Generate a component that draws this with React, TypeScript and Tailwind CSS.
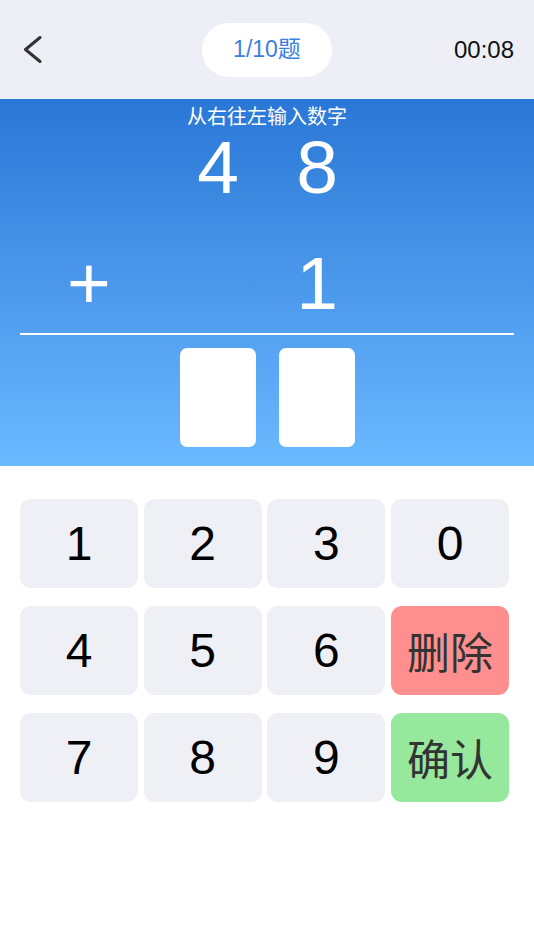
import React from "react";

const digitFont = { fontFamily: '"Liberation Sans", Arial, "Noto Sans CJK SC", sans-serif' };
const cjkFont = { fontFamily: '"Noto Sans CJK SC", "Liberation Sans", sans-serif' };

function Key({ label, kind }: { label: string; kind?: "del" | "ok" }) {
  const bg = kind === "del" ? "bg-[#ff8f8f]" : kind === "ok" ? "bg-[#96e89c]" : "bg-[#efeff6]";
  const text = kind ? "text-[43px] text-[#333333]" : "text-[48px] text-black";
  return (
    <div
      className={`h-[89px] rounded-[11px] flex items-center justify-center leading-none ${bg} ${text}`}
      style={kind ? cjkFont : digitFont}
    >
      {label}
    </div>
  );
}

export default function App() {
  const keys: { label: string; kind?: "del" | "ok" }[] = [
    { label: "1" }, { label: "2" }, { label: "3" }, { label: "0" },
    { label: "4" }, { label: "5" }, { label: "6" }, { label: "删除", kind: "del" },
    { label: "7" }, { label: "8" }, { label: "9" }, { label: "确认", kind: "ok" },
  ];
  return (
    <div className="w-[534px] h-[950px] bg-white" style={digitFont}>
      {/* Header */}
      <div className="h-[99px] bg-[#eeeff6] grid grid-cols-3 items-center">
        <div className="pl-[24px] flex items-center">
          <svg width="18" height="28" viewBox="0 0 18 28">
            <polyline points="16,1.5 1.5,13.5 16,25.5" fill="none" stroke="#333333" strokeWidth="3" strokeLinecap="round" strokeLinejoin="round" />
          </svg>
        </div>
        <div className="flex justify-center">
          <div className="w-[130px] h-[54px] rounded-full bg-white flex items-center justify-center text-[23px] text-[#3a80e0] leading-none">
            1/10题
          </div>
        </div>
        <div className="flex justify-end pr-[20px] text-[24px] text-[#111111] leading-none">00:08</div>
      </div>

      {/* Problem area */}
      <div className="h-[367px] bg-linear-to-b from-[#2a77d7] to-[#6bb9ff] flex flex-col pt-[5px] text-white">
        <div className="h-[24px] leading-[24px] text-[20px] text-center" style={cjkFont}>
          从右往左输入数字
        </div>
        <div className="flex pl-[51px] mt-[2px] h-[75px] text-[75px] leading-none">
          <div className="w-[76px] text-center"></div>
          <div className="w-[76px] ml-[53px] text-center">4</div>
          <div className="w-[76px] ml-[23px] text-center">8</div>
        </div>
        <div className="flex pl-[51px] mt-[41px] h-[75px] text-[75px] leading-none">
          <div className="w-[76px] text-center">+</div>
          <div className="w-[76px] ml-[53px] text-center"></div>
          <div className="w-[76px] ml-[23px] text-center">1</div>
        </div>
        <div className="mx-[20px] mt-[12px] h-[2px] bg-white"></div>
        <div className="flex pl-[180px] mt-[13px] gap-[23px]">
          <div className="w-[76px] h-[99px] rounded-[7px] bg-white"></div>
          <div className="w-[76px] h-[99px] rounded-[7px] bg-white"></div>
        </div>
      </div>

      {/* Keypad */}
      <div className="ml-[20px] w-[489px] mt-[33px] grid grid-cols-4 gap-x-[5.67px] gap-y-[18px]">
        {keys.map((k) => (
          <Key key={k.label} label={k.label} kind={k.kind} />
        ))}
      </div>
    </div>
  );
}
